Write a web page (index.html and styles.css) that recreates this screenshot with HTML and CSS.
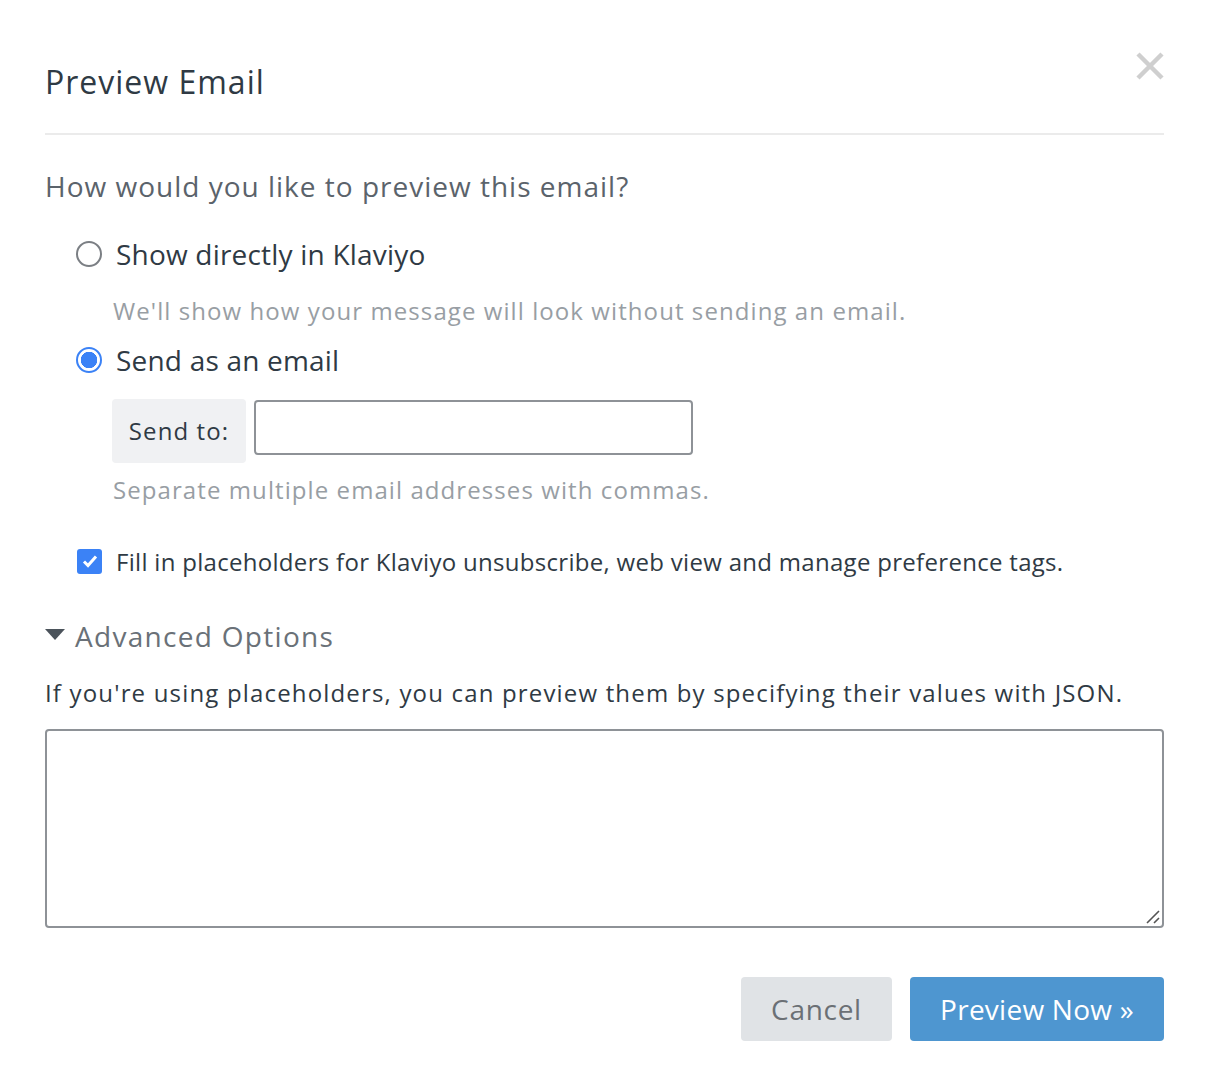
FILE: index.html
```html
<!DOCTYPE html>
<html>
<head>
<meta charset="utf-8">
<link rel="stylesheet" href="styles.css">
</head>
<body>
<div class="modal">
  <div class="header">
    <h1 class="title">Preview Email</h1>
    <span class="close" aria-label="Close">
      <svg width="30" height="30" viewBox="0 0 30 30"><path d="M3 3 L27 27 M27 3 L3 27" stroke="#cfcfcf" stroke-width="4.5" stroke-linecap="butt"/></svg>
    </span>
  </div>
  <div class="body">
    <p class="question">How would you like to preview this email?</p>
    <div class="options">
      <label class="radio-row">
        <span class="radio"></span>
        <span class="radio-label">Show directly in Klaviyo</span>
      </label>
      <p class="help help-radio">We'll show how your message will look without sending an email.</p>
      <label class="radio-row radio-row-2">
        <span class="radio checked"></span>
        <span class="radio-label">Send as an email</span>
      </label>
      <div class="input-group">
        <span class="addon">Send to:</span>
        <span class="input"></span>
      </div>
      <p class="help help-input">Separate multiple email addresses with commas.</p>
      <label class="check-row">
        <span class="checkbox">
          <svg width="24" height="24" viewBox="0 0 24 24"><path d="M6 12.5 L10 16.5 L18 7.5" fill="none" stroke="#fff" stroke-width="3"/></svg>
        </span>
        <span class="check-label">Fill in placeholders for Klaviyo unsubscribe, web view and manage preference tags.</span>
      </label>
    </div>
    <div class="advanced">
      <span class="caret"></span>
      <span class="advanced-label">Advanced Options</span>
    </div>
    <p class="json-help">If you're using placeholders, you can preview them by specifying their values with JSON.</p>
    <div class="textarea">
      <svg class="grip" width="16" height="16" viewBox="0 0 16 16"><path d="M2 14 L14 2 M9 14 L14 9" stroke="#555" stroke-width="1.6"/></svg>
    </div>
    <div class="footer">
      <button class="btn btn-cancel">Cancel</button>
      <button class="btn btn-primary">Preview Now »</button>
    </div>
  </div>
</div>
</body>
</html>
```
FILE: styles.css
```css
* { box-sizing: border-box; }
html, body { margin: 0; padding: 0; background: #fff; }
body {
  font-family: "Open Sans", Lato, "Liberation Sans", sans-serif;
  color: #2f3a44;
}
.modal { padding: 0 44px 0 45px; }
.header {
  display: flex;
  justify-content: space-between;
  align-items: flex-start;
  border-bottom: 2px solid #ebebeb;
  height: 135px;
}
.title {
  margin: 0;
  padding-top: 60px;
  font-size: 32px;
  line-height: 44px;
  font-weight: 400;
  letter-spacing: 1px;
  color: #2f3a44;
}
.close { margin-top: 51px; margin-right: -1px; display: block; }
.close svg { display: block; }
.body { display: flex; flex-direction: column; }
.question {
  margin: 0;
  margin-top: 33px;
  font-size: 28px;
  line-height: 36px;
  letter-spacing: 1px;
  color: #5b636b;
}
.options { padding-left: 31px; display: flex; flex-direction: column; }
.radio-row {
  display: flex;
  align-items: center;
  height: 40px;
  margin-top: 30px;
}
.radio-row-2 { margin-top: 12px; }
.radio {
  width: 26px; height: 26px;
  border-radius: 50%;
  border: 2px solid #7b7f84;
  margin-right: 14px;
  flex: none;
}
.radio.checked {
  border: 2px solid #3b82f6;
  background: radial-gradient(circle, #3b82f6 0 8px, #fff 8.5px);
}
.radio-label { font-size: 28px; letter-spacing: 0.2px; color: #2f3a44; }
.help {
  margin: 0;
  font-size: 24px;
  line-height: 34px;
  letter-spacing: 1.08px;
  color: #989ea4;
  padding-left: 37px;
}
.help-radio { margin-top: 20px; }
.input-group {
  display: flex;
  align-items: flex-start;
  margin-left: 36px;
  margin-top: 19px;
}
.addon {
  width: 134px; height: 64px;
  background: #f0f1f3;
  border-radius: 4px;
  font-size: 24px;
  line-height: 64px;
  letter-spacing: 1.1px;
  text-align: center;
  color: #2f3a44;
}
.input {
  margin-left: 8px;
  margin-top: 1px;
  width: 439px;
  height: 55px;
  border: 2px solid #8e9297;
  border-radius: 4px;
  background: #fff;
}
.help-input { margin-top: 10px; }
.check-row {
  display: flex;
  align-items: center;
  margin-top: 39px;
  height: 30px;
}
.checkbox {
  width: 25px; height: 25px;
  background: #3b82f6;
  border-radius: 3px;
  margin-left: 1px;
  margin-right: 14px;
  display: flex; align-items: center; justify-content: center;
  flex: none;
}
.checkbox svg { display: block; }
.check-label { font-size: 24px; letter-spacing: 0.3px; color: #2f3a44; }
.advanced {
  display: flex;
  align-items: center;
  margin-top: 40px;
  height: 40px;
}
.caret {
  width: 0; height: 0;
  border-left: 10px solid transparent;
  border-right: 10px solid transparent;
  border-top: 11px solid #4b535b;
  margin-right: 10px;
  margin-top: -4px;
}
.advanced-label { font-size: 28px; letter-spacing: 1.3px; color: #6a7178; }
.json-help {
  margin: 0;
  margin-top: 21px;
  font-size: 24px;
  line-height: 32px;
  letter-spacing: 1.17px;
  color: #2f3a44;
}
.textarea {
  margin-top: 20px;
  height: 199px;
  border: 2px solid #8e9297;
  border-radius: 4px;
  position: relative;
}
.grip { position: absolute; right: 1px; bottom: 1px; }
.footer {
  display: flex;
  justify-content: flex-end;
  gap: 18px;
  margin-top: 49px;
}
.btn {
  height: 64px;
  border: none;
  border-radius: 4px;
  font-family: inherit;
  font-size: 28px;
  padding: 0;
}
.btn-cancel { width: 151px; background: #e0e3e6; color: #6b7075; letter-spacing: 0.7px; }
.btn-primary { width: 254px; background: #4e96d0; color: #fff; letter-spacing: 0.25px; }
```
